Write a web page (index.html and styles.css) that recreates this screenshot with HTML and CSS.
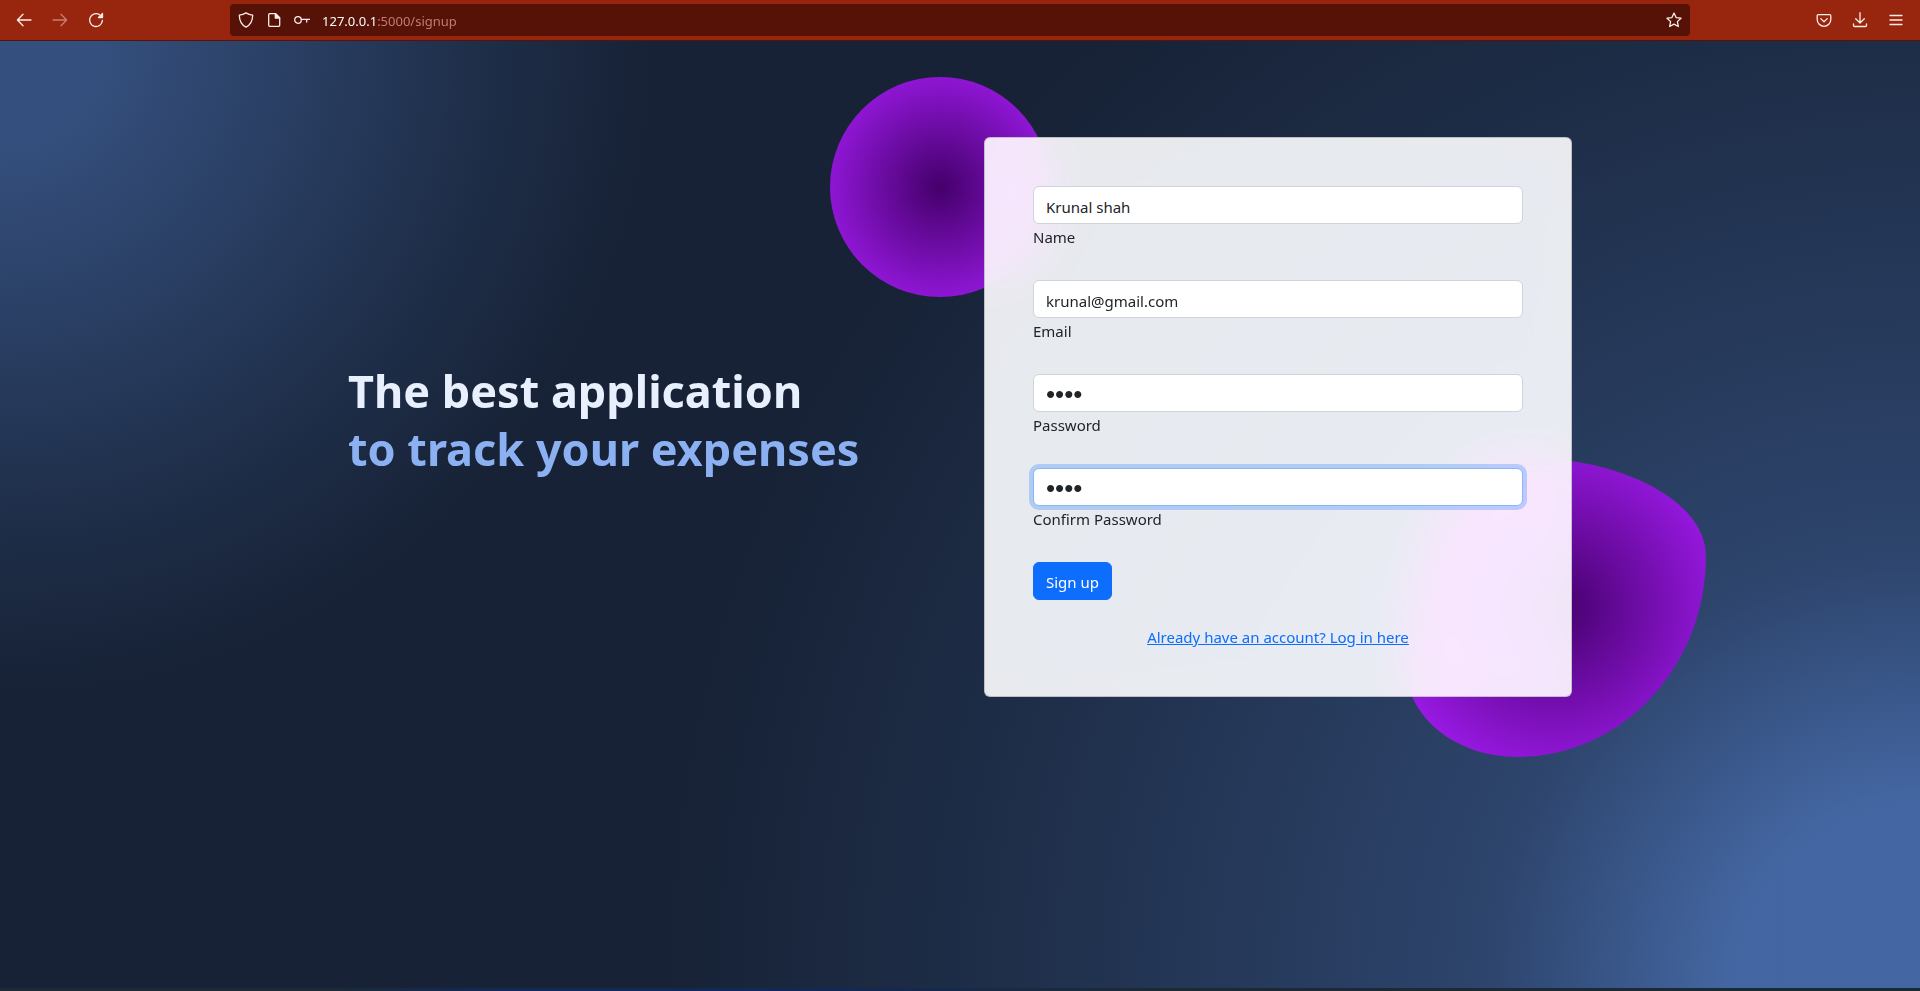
FILE: index.html
```html
<!DOCTYPE html>
<html lang="en">
<head>
<meta charset="utf-8">
<meta name="viewport" content="width=device-width, initial-scale=1">
<title>Sign up</title>
<link rel="stylesheet" href="styles.css">
</head>
<body>
<header class="toolbar">
  <nav class="nav-buttons" aria-label="History">
    <button class="icon-button" type="button" aria-label="Back"><svg viewBox="0 0 16 16"><path d="M15 8H1.6M7 2.2 1.4 8 7 13.8"/></svg></button>
    <button class="icon-button" type="button" aria-label="Forward" disabled><svg viewBox="0 0 16 16"><path d="M1 8h13.4M9 2.2 14.6 8 9 13.8"/></svg></button>
    <button class="icon-button" type="button" aria-label="Reload"><svg viewBox="0 0 16 16"><path d="M11.6 2.8A6.4 6.4 0 1 0 14.4 8.400"/><path class="solid" d="M14.500 1.500v4h-4z"/></svg></button>
  </nav>
  <div class="address-bar">
    <svg class="icon" viewBox="0 0 16 16"><path d="M8 .9c2 1.3 4.2 2 6.7 2.2 0 5.2-1.300 9.400-6.700 12.100C2.600 12.500 1.300 8.300 1.300 3.100 3.800 2.900 6 2.200 8 .9z"/></svg>
    <svg class="icon" viewBox="0 0 16 16"><path d="M3.700 1.700h6l4 4v7.600a1 1 0 0 1-1 1h-9a1 1 0 0 1-1-1V2.700a1 1 0 0 1 1-1z"/><path class="solid" d="M9.300 1.700v4.400h4.400z"/></svg>
    <svg class="icon" viewBox="0 0 16 16"><circle cx="4" cy="8" r="3.300"/><path d="M7.300 7.300h8.200M12.700 7.300v2.700"/></svg>
    <span class="url"><span class="host">127.0.0.1</span>:5000/signup</span>
    <button class="icon-button bookmark" type="button" aria-label="Bookmark"><svg viewBox="0 0 16 16"><path d="M8 1.100l2.100 4.500 4.900.6-3.600 3.400.9 4.900L8 12.100l-4.300 2.400.9-4.900L1 6.200l4.900-.6z"/></svg></button>
  </div>
  <div class="tool-buttons">
    <button class="icon-button" type="button" aria-label="Pocket"><svg viewBox="0 0 16 16"><path d="M2.400 2.600h11.200a1.200 1.200 0 0 1 1.200 1.200v3.700a6.800 6.800 0 0 1-13.600 0V3.800a1.200 1.200 0 0 1 1.200-1.200z"/><path d="M4.700 6.600 8 9.700l3.300-3.100"/></svg></button>
    <button class="icon-button" type="button" aria-label="Downloads"><svg viewBox="0 0 16 16"><path d="M8 .7v10M3.700 6.700 8 11l4.300-4.300M1.500 12v1.500a1 1 0 0 0 1 1h11a1 1 0 0 0 1-1V12"/></svg></button>
    <button class="icon-button" type="button" aria-label="Menu"><svg viewBox="0 0 16 16"><path d="M2 3.500h12M2 8h12M2 12.500h12"/></svg></button>
  </div>
</header>
<main class="page">
  <div class="container">
    <div class="pitch">
      <h1 class="headline">The best application <span class="headline-accent">to track your expenses</span></h1>
    </div>
    <div class="signup">
      <div class="blob blob-round"></div>
      <div class="blob blob-organic"></div>
      <form class="card">
        <div class="field">
          <input class="text-input" id="name" type="text" value="Krunal shah">
          <label class="caption" for="name">Name</label>
        </div>
        <div class="field">
          <input class="text-input" id="email" type="email" value="krunal@gmail.com">
          <label class="caption" for="email">Email</label>
        </div>
        <div class="field">
          <input class="text-input is-secret" id="password" type="password" value="1234">
          <label class="caption" for="password">Password</label>
        </div>
        <div class="field">
          <input class="text-input is-secret is-focused" id="confirm" type="password" value="1234">
          <label class="caption" for="confirm">Confirm Password</label>
        </div>
        <button class="submit" type="button">Sign up</button>
        <p class="caption login"><a href="#login">Already have an account? Log in here</a></p>
      </form>
    </div>
  </div>
</main>
</body>
</html>
```
FILE: styles.css
```css
*, *::before, *::after { box-sizing: border-box; }
body {
  margin: 0;
  min-height: 100vh;
  padding-bottom: 3px;
  display: flex;
  flex-direction: column;
  font: 15px/24px "Noto Sans", "Open Sans", sans-serif;
  color: #212529;
  background: linear-gradient(90deg, #1c2a36 17%, #11285a 27%, #11285a 40%, #1c2a36 60%);
}
.toolbar {
  display: flex;
  align-items: center;
  justify-content: space-between;
  height: 41px;
  padding: 0 12px;
  background: #98250d;
  border-bottom: 1px solid #541408;
}
.nav-buttons, .tool-buttons { display: flex; gap: 12px; }
.icon-button {
  display: flex;
  padding: 4px;
  border: 0;
  background: none;
  color: #fbeeea;
}
.icon-button:disabled { opacity: 0.45; }
svg {
  width: 16px;
  height: 16px;
  fill: none;
  stroke: currentColor;
  stroke-width: 1.3;
  stroke-linecap: round;
  stroke-linejoin: round;
}
.solid { fill: currentColor; }
.address-bar {
  display: flex;
  align-items: center;
  gap: 12px;
  width: 77%;
  height: 32px;
  padding: 0 4px 0 8px;
  border-radius: 4px;
  background: #561207;
  color: #fbeeea;
}
.url { padding-top: 2px; font-size: 13px; line-height: 20px; color: #c07c6e; }
.host { color: #fbfbfe; }
.bookmark { margin-left: auto; }
.page {
  flex: 1;
  overflow: hidden;
  background-color: hsl(218, 41%, 15%);
  background-image:
    radial-gradient(650px circle at 0% 0%, hsl(218, 41%, 35%) 15%, hsl(218, 41%, 30%) 35%, hsl(218, 41%, 20%) 75%, hsl(218, 41%, 19%) 80%, transparent 100%),
    radial-gradient(1250px circle at 100% 100%, hsl(218, 41%, 45%) 15%, hsl(218, 41%, 30%) 35%, hsl(218, 41%, 20%) 75%, hsl(218, 41%, 19%) 80%, transparent 100%);
}
.container {
  display: grid;
  grid-template-columns: 1fr 1fr;
  align-items: center;
  max-width: 1320px;
  margin: 48px auto;
  padding: 48px 24px;
}
.pitch { padding: 0 24px; }
.headline {
  margin: 48px 0;
  padding-top: 6px;
  font-size: 45px;
  line-height: 58px;
  font-weight: 700;
  color: hsl(218, 81%, 95%);
}
.headline-accent { display: block; color: hsl(218, 81%, 75%); }
.signup { position: relative; padding: 0 24px; }
.blob { position: absolute; background: radial-gradient(#44006b, #ad1fff); }
.blob-round { top: -60px; left: -130px; width: 220px; height: 220px; border-radius: 50%; }
.blob-organic {
  right: -110px;
  bottom: -60px;
  width: 300px;
  height: 300px;
  border-radius: 38% 62% 63% 37% / 70% 33% 67% 30%;
}
.card {
  position: relative;
  padding: 48px;
  border: 1px solid rgba(0, 0, 0, 0.18);
  border-radius: 6px;
  background: hsla(0, 0%, 100%, 0.9);
  backdrop-filter: saturate(200%) blur(25px);
}
.field { display: flex; flex-direction: column; margin-bottom: 32px; }
.caption { padding-top: 3px; line-height: 21px; }
.text-input {
  width: 100%;
  height: 38px;
  padding: 8px 12px 5px;
  border: 1px solid #ced4da;
  border-radius: 6px;
  background: #fff;
  color: inherit;
  font: inherit;
  line-height: 23px;
  outline: 0;
}
.is-secret { font-family: "Liberation Sans", sans-serif; font-size: 26px; }
.is-focused { border-color: #86b7fe; box-shadow: 0 0 0 4px rgba(13, 110, 253, 0.25); }
.submit {
  display: block;
  height: 38px;
  margin-bottom: 24px;
  padding: 8px 12px 5px;
  border: 1px solid #0d6efd;
  border-radius: 6px;
  background: #0d6efd;
  color: #fff;
  font: inherit;
  line-height: 23px;
}
.login { margin: 0; text-align: center; }
.login a { color: #0d6efd; }
```
